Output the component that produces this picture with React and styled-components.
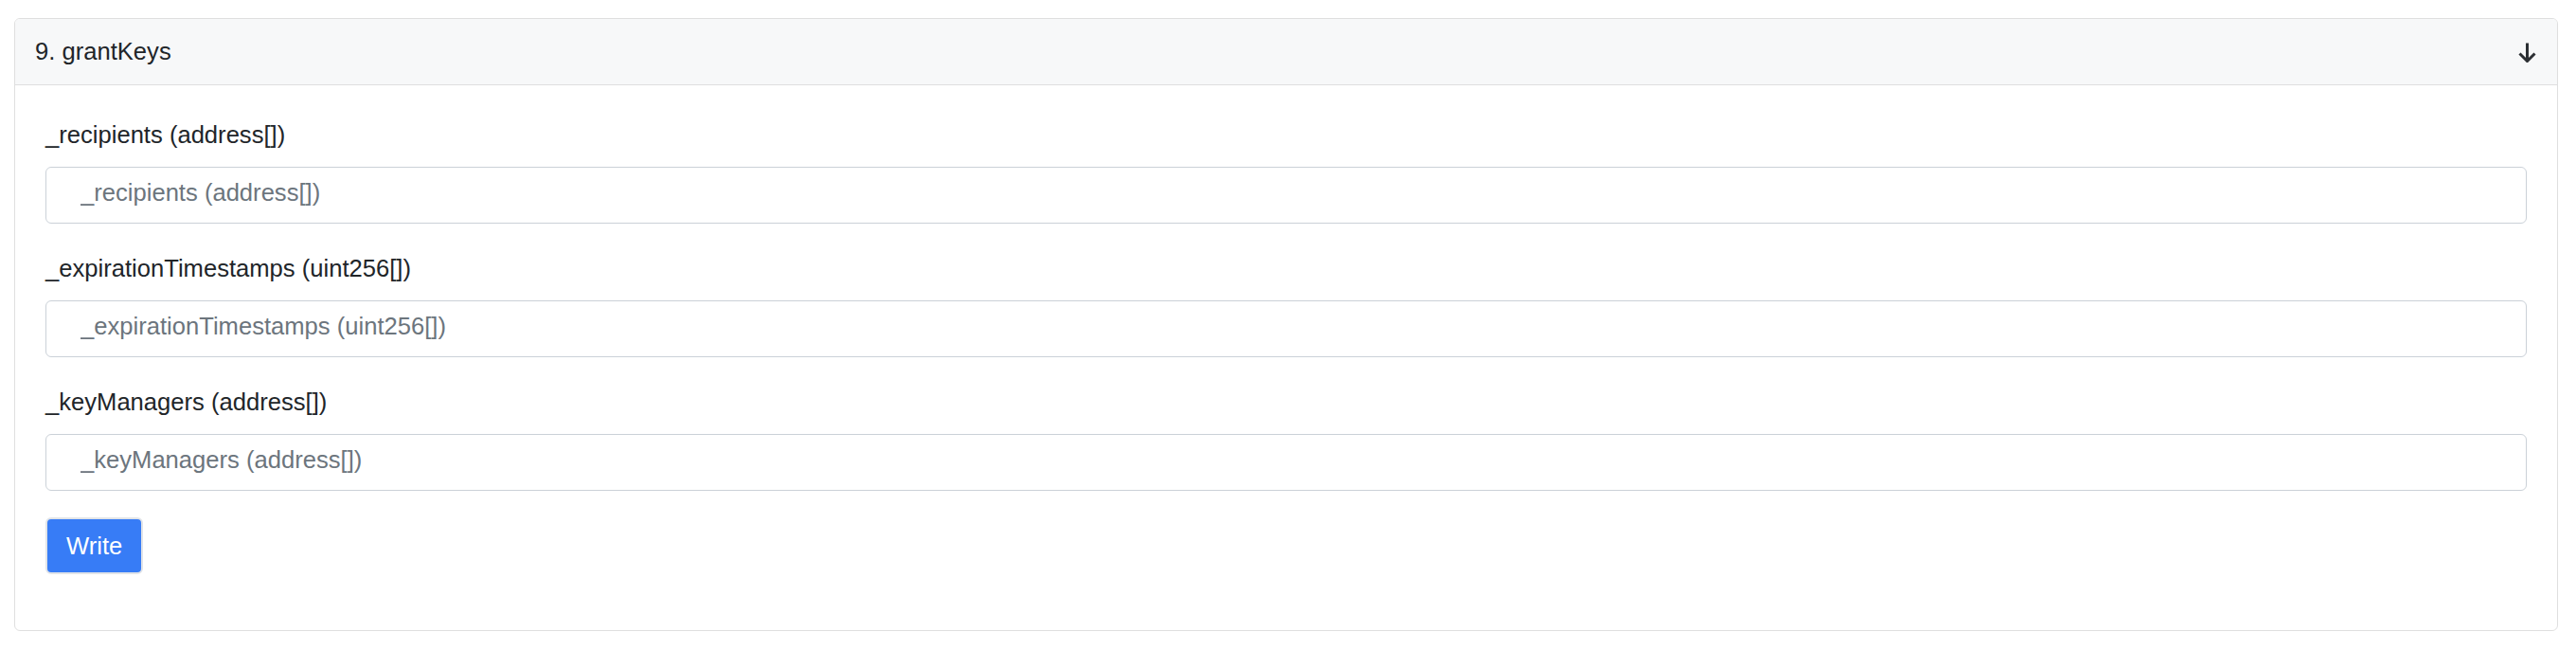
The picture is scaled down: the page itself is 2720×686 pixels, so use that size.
import React from 'react';
import styled, { createGlobalStyle } from 'styled-components';

// #region global
const GlobalStyle = createGlobalStyle`
  html, body {
    margin: 0;
    padding: 0;
    background: #ffffff;
  }
  body {
    font-family: "Liberation Sans", Arial, Helvetica, sans-serif;
    font-size: 25.6px;
    line-height: 38.4px;
    color: #212529;
  }
  * {
    box-sizing: border-box;
  }
`;
// #endregion

// #region styled components
const Page = styled.div`
  padding: 19px 19px 0 15px;
`;

const Card = styled.section`
  border: 1px solid #dfdfdf;
  border-radius: 6px;
  background: #ffffff;
  overflow: hidden;
`;

const CardHeader = styled.header`
  display: flex;
  align-items: center;
  justify-content: space-between;
  padding: 15px 22px 16px 21px;
  background: #f7f8f9;
  border-bottom: 1px solid #dfdfdf;
  line-height: 38.4px;
`;

const Title = styled.span`
  color: #212529;
`;

const ToggleIcon = styled.svg`
  display: block;
  width: 19px;
  height: 21px;
  margin-top: 2px;
`;

const CardBody = styled.div`
  display: flex;
  flex-direction: column;
  gap: 28px;
  padding: 33px 32px 59px 32px;
`;

const Field = styled.div`
  display: flex;
  flex-direction: column;
`;

const Label = styled.label`
  display: block;
  margin-bottom: 14.6px;
  line-height: 38.4px;
  color: #212529;
`;

const Input = styled.input`
  display: block;
  width: 100%;
  height: 60px;
  padding: 0 36px 6px 36px;
  font-family: inherit;
  font-size: 25.6px;
  line-height: 38.4px;
  color: #495057;
  background: #ffffff;
  border: 1px solid #cbd1d8;
  border-radius: 6px;
  outline: none;

  &::placeholder {
    color: #6c757d;
    opacity: 1;
  }
`;

const Actions = styled.div`
  display: flex;
`;

const WriteButton = styled.button`
  height: 60px;
  padding: 0 20px;
  font-family: inherit;
  font-size: 25.6px;
  line-height: 38.4px;
  color: #ffffff;
  background: #377cf6;
  border: 2px solid #e1e4e8;
  border-radius: 6px;
  cursor: pointer;
`;
// #endregion

const fields = [
  '_recipients (address[])',
  '_expirationTimestamps (uint256[])',
  '_keyManagers (address[])',
];

const ArrowDown = () => (
  <ToggleIcon viewBox="0 0 19 21" fill="none" stroke="#2b2f33" strokeWidth="3">
    <path d="M9.5 0.5v19" />
    <path d="M1.5 11.5l8 8 8-8" strokeLinejoin="miter" />
  </ToggleIcon>
);

const App = () => {
  return (
    <Page>
      <GlobalStyle />
      <Card>
        <CardHeader>
          <Title>9. grantKeys</Title>
          <ArrowDown />
        </CardHeader>
        <CardBody>
          {fields.map((name) => (
            <Field key={name}>
              <Label>{name}</Label>
              <Input placeholder={name} />
            </Field>
          ))}
          <Actions>
            <WriteButton type="button">Write</WriteButton>
          </Actions>
        </CardBody>
      </Card>
    </Page>
  );
};

App.displayName = 'App';

export default App;
